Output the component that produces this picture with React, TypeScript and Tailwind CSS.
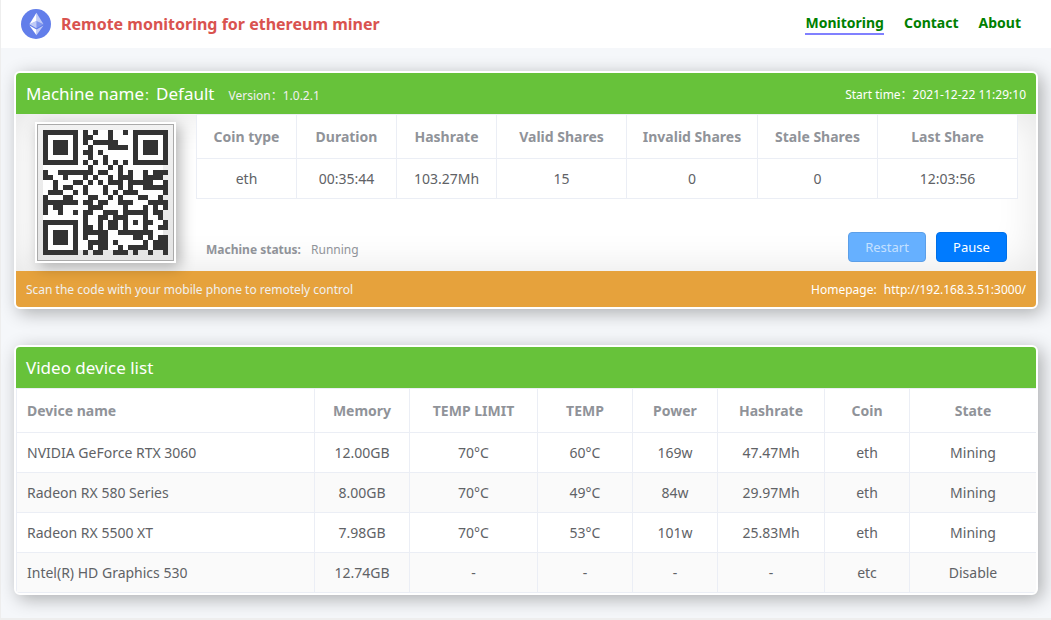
const HOMEPAGE = 'http://192.168.3.51:3000/';

/* ---------- QR code, version 2, level M, mask 6 ---------- */

const SIZE = 25;
const DATA_WORDS = 28;
const EC_WORDS = 16;
const FORMAT = '100111110010111';

function gfMul(a: number, b: number): number {
  let r = 0;
  for (let i = 7; i >= 0; i--) {
    r = (r << 1) ^ ((r >> 7) * 0x11d);
    r ^= ((b >> i) & 1) * a;
  }
  return r;
}

function errorWords(data: number[]): number[] {
  const gen: number[] = new Array(EC_WORDS).fill(0);
  gen[EC_WORDS - 1] = 1;
  let root = 1;
  for (let i = 0; i < EC_WORDS; i++) {
    for (let j = 0; j < EC_WORDS; j++) {
      gen[j] = gfMul(gen[j], root);
      if (j + 1 < EC_WORDS) gen[j] ^= gen[j + 1];
    }
    root = gfMul(root, 2);
  }
  const rem: number[] = new Array(EC_WORDS).fill(0);
  for (const b of data) {
    const f = b ^ (rem.shift() as number);
    rem.push(0);
    gen.forEach((g, i) => (rem[i] ^= gfMul(g, f)));
  }
  return rem;
}

function encode(text: string): string {
  const bin = (n: number, w = 8) => n.toString(2).padStart(w, '0');
  let bits = '0100' + bin(text.length);
  for (const ch of text) bits += bin(ch.charCodeAt(0));
  bits += '0000';
  const words: number[] = [];
  for (let i = 0; i < bits.length; i += 8) words.push(parseInt(bits.slice(i, i + 8), 2));
  for (let pad = 0xec; words.length < DATA_WORDS; pad ^= 0xec ^ 0x11) words.push(pad);
  return [...words, ...errorWords(words)].map((w) => bin(w)).join('');
}

function qrMatrix(text: string): number[][] {
  const m: number[][] = Array.from({ length: SIZE }, () => new Array(SIZE).fill(-1));
  const square = (cy: number, cx: number, reach: number, light: number[]) => {
    for (let dy = -reach; dy <= reach; dy++)
      for (let dx = -reach; dx <= reach; dx++) {
        const y = cy + dy;
        const x = cx + dx;
        if (y < 0 || x < 0 || y >= SIZE || x >= SIZE) continue;
        m[y][x] = light.includes(Math.max(Math.abs(dy), Math.abs(dx))) ? 0 : 1;
      }
  };
  for (let i = 0; i < SIZE; i++) m[6][i] = m[i][6] = i % 2 === 0 ? 1 : 0;
  square(3, 3, 4, [2, 4]);
  square(3, SIZE - 4, 4, [2, 4]);
  square(SIZE - 4, 3, 4, [2, 4]);
  square(18, 18, 2, [1]);

  const near = [0, 1, 2, 3, 4, 5, 7, 8];
  for (let i = 0; i < 15; i++) {
    const bit = Number(FORMAT[i]);
    if (i < 8) m[8][near[i]] = bit;
    else m[[7, 5, 4, 3, 2, 1, 0][i - 8]][8] = bit;
    if (i < 7) m[SIZE - 1 - i][8] = bit;
    else m[8][SIZE - 15 + i] = bit;
  }
  m[SIZE - 8][8] = 1;

  const bits = encode(text);
  let k = 0;
  let up = true;
  for (let right = SIZE - 1; right > 0; right -= 2) {
    if (right === 6) right = 5;
    for (let n = 0; n < SIZE; n++) {
      const y = up ? SIZE - 1 - n : n;
      for (const x of [right, right - 1]) {
        if (m[y][x] !== -1) continue;
        const bit = k < bits.length ? Number(bits[k]) : 0;
        k++;
        const flip = (((y * x) % 2) + ((y * x) % 3)) % 2 === 0 ? 1 : 0;
        m[y][x] = bit ^ flip;
      }
    }
    up = !up;
  }
  return m;
}

function QrCode({ text }: { text: string }) {
  const path = qrMatrix(text)
    .flatMap((row, y) => row.map((v, x) => (v ? `M${x} ${y}h1v1h-1z` : '')))
    .join('');
  return (
    <svg role="img" aria-label={text} viewBox="0 0 25 25" shapeRendering="crispEdges" className="block size-[125px]">
      <rect width="24" height="24" fill="#fff" />
      <path d={path} fill="#333" />
    </svg>
  );
}

function EthLogo() {
  return (
    <svg viewBox="0 0 32 32" className="size-[30px]" aria-hidden="true">
      <circle cx="16" cy="16" r="16" fill="#627eea" />
      <g fill="#fff">
        <path fillOpacity=".6" d="M16.5 4v8.87l7.5 3.35z" />
        <path d="M16.5 4L9 16.22l7.5-3.35z" />
        <path fillOpacity=".6" d="M16.5 21.97v6.03L24 17.62z" />
        <path d="M16.5 28v-6.03L9 17.62z" />
        <path fillOpacity=".2" d="M16.5 20.57l7.5-4.35-7.5-3.35z" />
        <path fillOpacity=".6" d="M9 16.22l7.5 4.35v-7.7z" />
      </g>
    </svg>
  );
}

/* ---------- data ---------- */

const summary = [
  { label: 'Coin type', value: 'eth', width: 'w-[101px]' },
  { label: 'Duration', value: '00:35:44', width: 'w-[100px]' },
  { label: 'Hashrate', value: '103.27Mh', width: 'w-[100px]' },
  { label: 'Valid Shares', value: '15', width: 'w-[130px]' },
  { label: 'Invalid Shares', value: '0', width: 'w-[131px]' },
  { label: 'Stale Shares', value: '0', width: 'w-[120px]' },
  { label: 'Last Share', value: '12:03:56', width: 'w-[140px]' },
];

const deviceColumns = [
  { label: 'Device name', width: '' },
  { label: 'Memory', width: 'w-[95px]' },
  { label: 'TEMP LIMIT', width: 'w-[128px]' },
  { label: 'TEMP', width: 'w-[95px]' },
  { label: 'Power', width: 'w-[85px]' },
  { label: 'Hashrate', width: 'w-[107px]' },
  { label: 'Coin', width: 'w-[85px]' },
  { label: 'State', width: 'w-[126px]' },
];

const devices = [
  ['NVIDIA GeForce RTX 3060', '12.00GB', '70°C', '60°C', '169w', '47.47Mh', 'eth', 'Mining'],
  ['Radeon RX 580 Series', '8.00GB', '70°C', '49°C', '84w', '29.97Mh', 'eth', 'Mining'],
  ['Radeon RX 5500 XT', '7.98GB', '70°C', '53°C', '101w', '25.83Mh', 'eth', 'Mining'],
  ['Intel(R) HD Graphics 530', '12.74GB', '-', '-', '-', '-', 'etc', 'Disable'],
];

const card =
  'overflow-hidden rounded-md border-2 border-white bg-white shadow-[4px_4px_18px_rgba(0,0,0,0.3)]';

export default function App() {
  return (
    <div className="min-h-screen border-b-2 border-l border-[#eee] bg-[#f5f7fa] font-['Noto_Sans','Noto_Sans_CJK_SC',sans-serif] text-sm text-[#606266]">
      <header className="flex h-12 items-center justify-between bg-white pr-[30px] pl-5">
        <div className="flex items-center gap-[10px]">
          <EthLogo />
          <h1 className="text-base font-bold text-[#d9534f]">Remote monitoring for ethereum miner</h1>
        </div>
        <nav className="flex gap-5 pb-px text-sm font-bold text-[#008000]">
          <a href="#monitoring" className="border-b-2 border-[#8080ff]">Monitoring</a>
          <a href="#contact">Contact</a>
          <a href="#about">About</a>
        </nav>
      </header>

      <main className="flex flex-col gap-9 px-[13px] py-[23px]">
        <section className={card}>
          <div className="flex h-[41px] items-center justify-between bg-[#67c23a] px-[10px] pt-0.5 text-white">
            <div className="flex items-baseline gap-[14px]">
              <h2 className="text-[17px]">
                Machine name<span className="text-xs">：</span>Default
              </h2>
              <span className="text-xs text-[#f0f0f0]">Version：1.0.2.1</span>
            </div>
            <span className="text-xs">Start time：2021-12-22 11:29:10</span>
          </div>

          <div className="flex bg-white shadow-[inset_0_0_40px_rgba(0,0,0,0.11)]">
            <div className="w-[180px] shrink-0 py-2 pl-[19px]">
              <div className="w-fit border-2 border-white shadow-[4px_4px_14px_rgba(0,0,0,0.3)]">
                <div className="border border-[#aaa] bg-linear-to-b from-[#f2f2f2] to-[#e4e4e4] p-[5px]">
                  <QrCode text={HOMEPAGE} />
                </div>
              </div>
            </div>
            <div className="flex grow flex-col justify-between pr-[18px] pb-[9px]">
              <table className="w-full table-fixed border-separate border-spacing-0 bg-white text-center">
                <thead>
                  <tr className="h-[45px] text-[#909399]">
                    {summary.map((s) => (
                      <th key={s.label} className={`${s.width} border-y border-r border-[#ebeef5] font-bold first:border-l`}>
                        {s.label}
                      </th>
                    ))}
                  </tr>
                </thead>
                <tbody>
                  <tr className="h-10">
                    {summary.map((s) => (
                      <td key={s.label} className="border-r border-b border-[#ebeef5] first:border-l">
                        {s.value}
                      </td>
                    ))}
                  </tr>
                </tbody>
              </table>
              <div className="flex items-end justify-between pr-[11px] pl-[10px]">
                <p className="pb-1 text-xs text-[#909399]">
                  <span className="mr-[10px] font-bold">Machine status:</span>
                  Running
                </p>
                <div className="flex gap-[10px] text-[13px] text-white">
                  <button disabled className="h-[30px] w-[78px] rounded border border-[#5c9fe8] bg-[#66b0ff] text-[#c4e0ff]">
                    Restart
                  </button>
                  <button className="h-[30px] w-[71px] rounded border border-[#0070e8] bg-[#007bff]">Pause</button>
                </div>
              </div>
            </div>
          </div>

          <div className="flex h-9 items-center justify-between bg-[#e6a23c] px-[10px] pt-0.5 text-xs text-white">
            <span className="text-[#f0f0f0]">Scan the code with your mobile phone to remotely control</span>
            <span>
              Homepage: <a href={HOMEPAGE} className="ml-1">{HOMEPAGE}</a>
            </span>
          </div>
        </section>

        <section className={card}>
          <h2 className="flex h-[41px] items-center bg-[#67c23a] px-[10px] pt-0.5 text-[17px] text-white">
            Video device list
          </h2>
          <table className="w-full table-fixed border-separate border-spacing-0 text-center">
            <thead>
              <tr className="h-[45px] text-[#909399]">
                {deviceColumns.map((c) => (
                  <th
                    key={c.label}
                    className={`${c.width} border-y border-r border-[#ebeef5] font-bold first:border-l first:pl-[10px] first:text-left last:border-r-0`}
                  >
                    {c.label}
                  </th>
                ))}
              </tr>
            </thead>
            <tbody>
              {devices.map((row) => (
                <tr key={row[0]} className="h-10 even:bg-[#fafafa]">
                  {row.map((cell, i) => (
                    <td
                      key={i}
                      className="border-r border-b border-[#ebeef5] first:border-l first:pl-[10px] first:text-left last:border-r-0"
                    >
                      {cell}
                    </td>
                  ))}
                </tr>
              ))}
            </tbody>
          </table>
        </section>
      </main>
    </div>
  );
}
